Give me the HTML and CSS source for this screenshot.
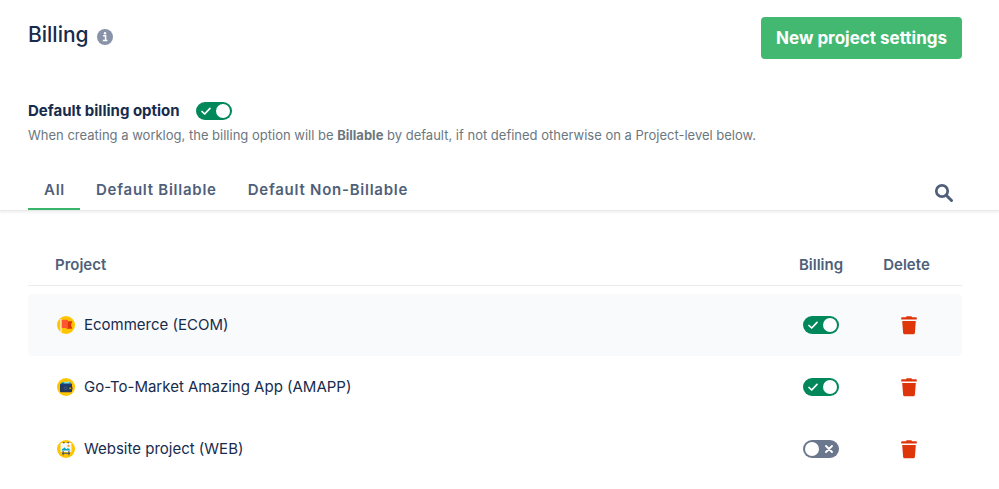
FILE: index.html
```html
<!DOCTYPE html>
<html lang="en">
<head>
<meta charset="utf-8">
<meta name="viewport" content="width=device-width, initial-scale=1">
<title>Billing</title>
<link rel="stylesheet" href="styles.css">
</head>
<body>
<svg class="sprite" aria-hidden="true">
  <symbol id="check" viewBox="0 0 12 12"><path d="M2 6.5 4.7 9 10 3.3" fill="none" stroke="currentColor" stroke-width="1.7" stroke-linecap="round" stroke-linejoin="round"/></symbol>
  <symbol id="cross" viewBox="0 0 12 12"><path d="m3 3 6 6m0-6L3 9" fill="none" stroke="currentColor" stroke-width="1.9" stroke-linecap="round"/></symbol>
  <symbol id="trash" viewBox="0 0 16 19"><path d="M5 1.2Q5.2.3 6 .3h4q.8 0 1 .9h4q.8 0 .8.8v.9q0 .5-.6.5H.8q-.6 0-.6-.5V2q0-.8.8-.8zM1.2 4.9h13.6l-.9 11.9q-.1 1.5-1.7 1.5H3.8q-1.6 0-1.7-1.5z" fill="currentColor"/></symbol>
</svg>
<header class="page-header">
  <div class="title">
    <h1>Billing</h1>
    <svg class="info" viewBox="0 0 16 16" role="img" aria-label="Information"><circle cx="8" cy="8" r="8" fill="#8993a7"/><path d="M6.1 6.8h2.5v4.5M5.8 11.6h4.6" fill="none" stroke="#fff" stroke-width="1.5"/><circle cx="8" cy="4.3" r="1.2" fill="#fff"/></svg>
  </div>
  <button class="primary" type="button">New project settings</button>
</header>
<section class="default-option">
  <div class="option-row">
    <label for="default-billing">Default billing option</label>
    <span class="toggle"><input id="default-billing" type="checkbox" role="switch" checked><svg class="on"><use href="#check"/></svg><svg class="off"><use href="#cross"/></svg></span>
  </div>
  <p>When creating a worklog, the billing option will be <strong>Billable</strong> by default, if not defined otherwise on a Project-level below.</p>
</section>
<nav class="tabs" aria-label="Project filter">
  <a class="tab active" href="#all">All</a>
  <a class="tab" href="#billable">Default Billable</a>
  <a class="tab" href="#non-billable">Default Non-Billable</a>
  <button class="search" type="button" aria-label="Search"><svg viewBox="0 0 20 20"><circle cx="8" cy="8" r="5.7" fill="none" stroke="currentColor" stroke-width="2.7"/><path d="m12.5 12.5 5 5" stroke="currentColor" stroke-width="3" stroke-linecap="round"/></svg></button>
</nav>
<main>
  <table>
    <thead>
      <tr><th class="project" scope="col">Project</th><th class="billing" scope="col">Billing</th><th class="delete" scope="col">Delete</th></tr>
    </thead>
    <tbody>
      <tr class="highlight">
        <td class="project"><div class="name"><svg class="avatar" viewBox="0 0 18 18"><circle cx="9" cy="9" r="9" fill="#ffc400"/><path d="M4 3v13" stroke="#f4f5f7" stroke-width="1.2"/><path d="M9.5 5.2h5.8L14 8.9l1.3 3.9H9.5z" fill="#de350b"/><path d="M4.7 3.8h6.2V12H4.7z" fill="#ff5630"/></svg><label for="ecom">Ecommerce (ECOM)</label></div></td>
        <td class="billing"><span class="toggle"><input id="ecom" type="checkbox" role="switch" checked><svg class="on"><use href="#check"/></svg><svg class="off"><use href="#cross"/></svg></span></td>
        <td class="delete"><button type="button" aria-label="Delete Ecommerce"><svg><use href="#trash"/></svg></button></td>
      </tr>
      <tr>
        <td class="project"><div class="name"><svg class="avatar" viewBox="0 0 18 18"><circle cx="9" cy="9" r="9" fill="#ffc400"/><path d="M4.5 4.2h9V7h-9z" fill="#00a3bf"/><path d="m7 4.2 5-.7.8 2.5H7z" fill="#79e2f2"/><rect x="3" y="5.6" width="12" height="8.6" rx="1" fill="#253858"/><path d="M3 6.8h12" stroke="#0747a6" stroke-width=".7"/><circle cx="8.6" cy="10.2" r="2" fill="#344f83"/><circle cx="8.6" cy="10.2" r=".7" fill="#172b4d"/><path d="M12 9h3.5v2.6H12z" fill="#344563"/><circle cx="13.2" cy="10.3" r=".8" fill="#ffc400"/></svg><label for="amapp">Go-To-Market Amazing App (AMAPP)</label></div></td>
        <td class="billing"><span class="toggle"><input id="amapp" type="checkbox" role="switch" checked><svg class="on"><use href="#check"/></svg><svg class="off"><use href="#cross"/></svg></span></td>
        <td class="delete"><button type="button" aria-label="Delete Go-To-Market Amazing App"><svg><use href="#trash"/></svg></button></td>
      </tr>
      <tr>
        <td class="project"><div class="name"><svg class="avatar" viewBox="0 0 18 18"><circle cx="9" cy="9" r="9" fill="#ffc400"/><rect x="3.5" y="3" width="11" height="9" rx=".7" fill="#f4f5f7"/><path d="M4.5 10.6q.3-2.1 2-2 .8-2 2.1-.2 1 1 1.6 0 1.5-1 3.3 2.2z" fill="#00a3bf"/><circle cx="11.4" cy="5.9" r="1.1" fill="#ff991f"/><path d="M6 2.6h1.5m3 0H12M6.1 11v4.2m5.8-4.2v4.2M5 13.2h8" fill="none" stroke="#42526e" stroke-width="1.1"/></svg><label for="web">Website project (WEB)</label></div></td>
        <td class="billing"><span class="toggle"><input id="web" type="checkbox" role="switch"><svg class="on"><use href="#check"/></svg><svg class="off"><use href="#cross"/></svg></span></td>
        <td class="delete"><button type="button" aria-label="Delete Website project"><svg><use href="#trash"/></svg></button></td>
      </tr>
    </tbody>
  </table>
</main>
</body>
</html>
```
FILE: styles.css
```css
* { box-sizing: border-box; }
body {
  margin: 0;
  background: #fff;
  color: #172b4d;
  font: 16px/24px Inter, "Liberation Sans", sans-serif;
}
h1, p { margin: 0; }
button {
  border: 0;
  padding: 0;
  background: none;
  font: inherit;
  cursor: pointer;
}
.sprite { position: absolute; width: 0; height: 0; }

.page-header {
  display: flex;
  justify-content: space-between;
  padding: 17px 37px 0 28px;
}
.title { display: flex; align-items: center; gap: 8px; height: 36px; }
h1 { font-size: 21px; line-height: 32px; font-weight: 500; }
.info { width: 16px; height: 16px; margin-top: 4px; }
.primary {
  height: 42px;
  padding: 0 15px;
  border-radius: 4px;
  background: #43b870;
  color: #fff;
  font-size: 17px;
  font-weight: 700;
}

.default-option { padding: 40px 37px 0 28px; }
.option-row { display: flex; align-items: center; gap: 16px; }
.option-row label { font-size: 15px; font-weight: 700; }
.default-option p { color: #6b7780; font-size: 13px; line-height: 24px; }

.toggle { position: relative; display: flex; width: 36px; height: 18px; color: #fff; }
.toggle input {
  display: flex;
  align-items: center;
  appearance: none;
  width: 100%;
  height: 100%;
  margin: 0;
  padding: 0 2px;
  border-radius: 9px;
  background: #6b778c;
  cursor: pointer;
}
.toggle input::before {
  content: "";
  width: 14px;
  height: 14px;
  border-radius: 50%;
  background: #fff;
}
.toggle input:checked { justify-content: flex-end; background: #00875a; }
.toggle svg { position: absolute; top: 3px; width: 12px; height: 12px; pointer-events: none; }
.toggle .on { left: 4px; display: none; }
.toggle .off { right: 4px; }
.toggle input:checked ~ .on { display: block; }
.toggle input:checked ~ .off { display: none; }

.tabs {
  display: flex;
  margin-top: 21px;
  padding: 0 37px 0 28px;
  border-bottom: 1px solid #e9e9e9;
  box-shadow: 0 2px 2px #0000000d;
}
.tab {
  padding: 10px 15px 6px 16px;
  border-bottom: 2px solid transparent;
  color: #505f79;
  font-size: 15px;
  font-weight: 600;
  letter-spacing: 0.05em;
  text-decoration: none;
}
.active { border-color: #36b56b; }
.search { margin: 7px 8px 0 auto; color: #505f79; }
.search svg { display: block; width: 20px; height: 20px; }

main { padding: 34px 37px 9px 28px; }
table { width: 100%; border-collapse: separate; border-spacing: 0; }
th {
  height: 41px;
  padding: 0;
  border-bottom: 1px solid #ebecf0;
  color: #505f79;
  font-size: 15px;
  font-weight: 600;
}
th.project { padding-left: 27px; text-align: left; }
th.billing { width: 84px; }
th.delete { width: 99px; padding-right: 12px; }
tbody::before { content: ""; display: table-row; height: 8px; }
td { height: 62px; padding: 0; }
td.project { padding-left: 29px; text-align: left; }
td.delete { padding-right: 8px; color: #de350b; }
.name { display: flex; align-items: center; gap: 9px; font-size: 15px; }
.avatar { width: 18px; height: 18px; }
.highlight td { background: #f9fafc; }
.highlight td:first-child { border-radius: 4px 0 0 4px; }
.highlight td:last-child { border-radius: 0 4px 4px 0; }
td .toggle { margin: 0 auto; }
td button { display: block; margin: 0 auto; color: inherit; }
td button svg { display: block; width: 16px; height: 19px; }
```
